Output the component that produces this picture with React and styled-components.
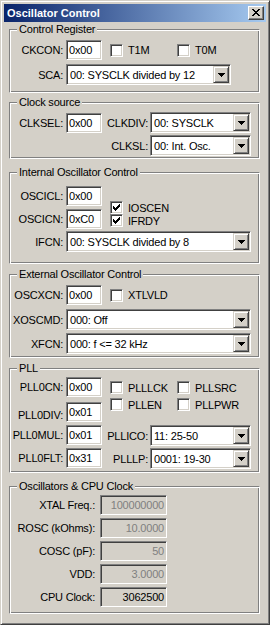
import React from "react";
import styled, { createGlobalStyle } from "styled-components";

const Global = createGlobalStyle`
  html, body { margin: 0; padding: 0; background: #D4D0C8; }
  body {
    font-family: "Liberation Sans", Arial, sans-serif;
    font-size: 11px;
    letter-spacing: -0.2px;
    color: #000;
  }
  * { box-sizing: border-box; }
`;

const Window = styled.div`
  width: 270px;
  height: 625px;
  border: 1px solid;
  border-color: #D4D0C8 #404040 #404040 #D4D0C8;
  box-shadow: inset 1px 1px 0 #fff, inset -1px -1px 0 #808080;
  padding: 3px;
  background: #D4D0C8;
  display: flex;
  flex-direction: column;
`;

const TitleBar = styled.div`
  height: 18px;
  flex: none;
  display: flex;
  align-items: center;
  justify-content: space-between;
  padding: 0 2px 0 2px;
  background: linear-gradient(to right, #0A246A, #A6CAF0);
`;

const TitleText = styled.span`
  color: #fff;
  font-weight: bold;
  font-size: 11px;
  letter-spacing: 0;
  padding-left: 1px;
`;

const CloseButton = styled.div`
  width: 16px;
  height: 14px;
  border: 1px solid;
  border-color: #fff #404040 #404040 #fff;
  box-shadow: inset -1px -1px 0 #808080;
  background: #D4D0C8;
  display: flex;
  align-items: center;
  justify-content: center;
  padding-bottom: 1px;
  svg { display: block; }
`;

const Body = styled.div`
  display: flex;
  flex-direction: column;
  padding: 0 6px 0 5px;
`;

const Group = styled.div`
  position: relative;
  height: ${(p) => p.$h}px;
  margin-top: ${(p) => p.$mt}px;
  padding: ${(p) => p.$pt}px 1px 0 1px;
  border: 1px solid;
  border-color: #808080 #fff #fff #808080;
  box-shadow: inset 1px 1px 0 #fff, inset -1px -1px 0 #808080;
  display: flex;
  flex-direction: column;
`;

const Legend = styled.span`
  position: absolute;
  top: -7px;
  left: 7px;
  padding: 0 2px;
  line-height: 13px;
  background: #D4D0C8;
  white-space: nowrap;
`;

const Row = styled.div`
  display: flex;
  align-items: center;
  margin-top: ${(p) => p.$mt || 0}px;
`;

const Cols = styled.div`
  display: flex;
  align-items: flex-start;
  margin-top: ${(p) => p.$mt || 0}px;
`;

const Stack = styled.div`
  display: flex;
  flex-direction: column;
  padding-top: ${(p) => p.$pt || 0}px;
  gap: ${(p) => p.$gap || 0}px;
`;

const Label = styled.span`
  flex: none;
  width: ${(p) => p.$w}px;
  padding-right: ${(p) => p.$pr ?? 3}px;
  padding-top: ${(p) => p.$dy || 0}px;
  text-align: right;
  white-space: nowrap;
`;

const TextBox = styled.div`
  flex: none;
  width: ${(p) => p.$w}px;
  height: 20px;
  border: 1px solid;
  border-color: #808080 #fff #fff #808080;
  box-shadow: inset 1px 1px 0 #404040, inset -1px -1px 0 #D4D0C8;
  background: ${(p) => (p.$disabled || p.$readonly ? "#D4D0C8" : "#fff")};
  color: ${(p) => (p.$disabled ? "#808080" : "#000")};
  display: flex;
  align-items: center;
  justify-content: ${(p) => (p.$right ? "flex-end" : "flex-start")};
  padding: 0 2px;
  white-space: nowrap;
`;

const ComboFrame = styled.div`
  flex: none;
  width: ${(p) => p.$w}px;
  height: 21px;
  border: 1px solid;
  border-color: #808080 #fff #fff #808080;
  box-shadow: inset 1px 1px 0 #404040, inset -1px -1px 0 #D4D0C8;
  background: #fff;
  display: flex;
  align-items: center;
  padding-right: 1px;
`;

const ComboText = styled.span`
  flex: 1;
  padding-left: 3px;
  white-space: nowrap;
  overflow: hidden;
`;

const DropButton = styled.div`
  flex: none;
  width: 16px;
  height: 17px;
  border: 1px solid;
  border-color: #D4D0C8 #404040 #404040 #D4D0C8;
  box-shadow: inset 1px 1px 0 #fff, inset -1px -1px 0 #808080;
  background: #D4D0C8;
  display: flex;
  align-items: center;
  justify-content: center;
  svg { display: block; }
`;

const CheckItem = styled.div`
  flex: none;
  display: flex;
  align-items: center;
  height: 13px;
  width: ${(p) => p.$w || 67}px;
  margin-left: ${(p) => p.$ml || 0}px;
`;

const CheckBoxFrame = styled.div`
  flex: none;
  width: 13px;
  height: 13px;
  border: 1px solid;
  border-color: #808080 #fff #fff #808080;
  box-shadow: inset 1px 1px 0 #404040, inset -1px -1px 0 #D4D0C8;
  background: #fff;
  padding: 2px;
  svg { display: block; }
`;

const CheckText = styled.span`
  margin-left: 5px;
  white-space: nowrap;
`;

const CheckGrid = styled.div`
  display: grid;
  grid-template-columns: 67px 67px;
  row-gap: 4px;
  padding-top: ${(p) => p.$pt || 0}px;
  margin-left: 8px;
`;

const Arrow = () => (
  <svg width="7" height="4" viewBox="0 0 7 4" shapeRendering="crispEdges">
    <rect x="0" y="0" width="7" height="1" />
    <rect x="1" y="1" width="5" height="1" />
    <rect x="2" y="2" width="3" height="1" />
    <rect x="3" y="3" width="1" height="1" />
  </svg>
);

const CloseGlyph = () => (
  <svg width="8" height="7" viewBox="0 0 8 7" shapeRendering="crispEdges">
    <rect x="0" y="0" width="2" height="1" />
    <rect x="6" y="0" width="2" height="1" />
    <rect x="1" y="1" width="2" height="1" />
    <rect x="5" y="1" width="2" height="1" />
    <rect x="2" y="2" width="4" height="1" />
    <rect x="3" y="3" width="2" height="1" />
    <rect x="2" y="4" width="4" height="1" />
    <rect x="1" y="5" width="2" height="1" />
    <rect x="5" y="5" width="2" height="1" />
    <rect x="0" y="6" width="2" height="1" />
    <rect x="6" y="6" width="2" height="1" />
  </svg>
);

const Combo = ({ w, children }) => (
  <ComboFrame $w={w}>
    <ComboText>{children}</ComboText>
    <DropButton>
      <Arrow />
    </DropButton>
  </ComboFrame>
);

const Check = ({ label, checked, ml, w }) => (
  <CheckItem $ml={ml} $w={w}>
    <CheckBoxFrame>
      {checked && (
        <svg width="7" height="7" viewBox="0 0 7 7" shapeRendering="crispEdges">
          <rect x="0" y="2" width="1" height="3" />
          <rect x="1" y="3" width="1" height="3" />
          <rect x="2" y="4" width="1" height="3" />
          <rect x="3" y="3" width="1" height="3" />
          <rect x="4" y="2" width="1" height="3" />
          <rect x="5" y="1" width="1" height="3" />
          <rect x="6" y="0" width="1" height="3" />
        </svg>
      )}
    </CheckBoxFrame>
    <CheckText>{label}</CheckText>
  </CheckItem>
);

const Field = ({ label, value, dy }) => (
  <Row>
    <Label $w={55} $dy={dy}>{label}</Label>
    <TextBox $w={36}>{value}</TextBox>
  </Row>
);

const clockRows = [
  { label: "XTAL Freq.:", value: "100000000", disabled: true },
  { label: "ROSC (kOhms):", value: "10.0000", disabled: true },
  { label: "COSC (pF):", value: "50", disabled: true },
  { label: "VDD:", value: "3.0000", disabled: true },
  { label: "CPU Clock:", value: "3062500", disabled: false },
];

export default function App() {
  return (
    <>
      <Global />
      <Window>
        <TitleBar>
          <TitleText>Oscillator Control</TitleText>
          <CloseButton>
            <CloseGlyph />
          </CloseButton>
        </TitleBar>
        <Body>
          <Group $h={64} $mt={7} $pt={10}>
            <Legend>Control Register</Legend>
            <Row>
              <Label $w={55}>CKCON:</Label>
              <TextBox $w={36}>0x00</TextBox>
              <Check label="T1M" ml={8} />
              <Check label="T0M" />
            </Row>
            <Row $mt={4}>
              <Label $w={55}>SCA:</Label>
              <Combo w={165}>00: SYSCLK divided by 12</Combo>
            </Row>
          </Group>

          <Group $h={57} $mt={9} $pt={9}>
            <Legend>Clock source</Legend>
            <Row>
              <Label $w={55}>CLKSEL:</Label>
              <TextBox $w={36}>0x00</TextBox>
              <Label $w={48} $pr={2}>CLKDIV:</Label>
              <Combo w={101}>00: SYSCLK</Combo>
            </Row>
            <Row $mt={2}>
              <Label $w={139} $pr={2}>CLKSL:</Label>
              <Combo w={101}>00: Int. Osc.</Combo>
            </Row>
          </Group>

          <Group $h={92} $mt={13} $pt={13}>
            <Legend>Internal Oscillator Control</Legend>
            <Cols>
              <Stack $gap={3}>
                <Field label="OSCICL:" value="0x00" />
                <Field label="OSCICN:" value="0xC0" />
              </Stack>
              <Stack $pt={15}>
                <Check label="IOSCEN" checked ml={8} />
                <Check label="IFRDY" checked ml={8} />
              </Stack>
            </Cols>
            <Row $mt={2}>
              <Label $w={55}>IFCN:</Label>
              <Combo w={185}>00: SYSCLK divided by 8</Combo>
            </Row>
          </Group>

          <Group $h={84} $mt={10} $pt={10}>
            <Legend>External Oscillator Control</Legend>
            <Row>
              <Label $w={55}>OSCXCN:</Label>
              <TextBox $w={36}>0x00</TextBox>
              <Check label="XTLVLD" ml={8} w={100} />
            </Row>
            <Row $mt={4}>
              <Label $w={55}>XOSCMD:</Label>
              <Combo w={185}>000: Off</Combo>
            </Row>
            <Row $mt={3}>
              <Label $w={55}>XFCN:</Label>
              <Combo w={185}>000: f &lt;= 32 kHz</Combo>
            </Row>
          </Group>

          <Group $h={105} $mt={10} $pt={8}>
            <Legend>PLL</Legend>
            <Cols>
              <Stack>
                <Field label="PLL0CN:" value="0x00" />
                <Row $mt={5}>
                  <Label $w={55} $dy={6}>PLL0DIV:</Label>
                  <TextBox $w={36}>0x01</TextBox>
                </Row>
                <Row $mt={3}>
                  <Label $w={55}>PLL0MUL:</Label>
                  <TextBox $w={36}>0x01</TextBox>
                </Row>
                <Row $mt={3}>
                  <Label $w={55}>PLL0FLT:</Label>
                  <TextBox $w={36}>0x31</TextBox>
                </Row>
              </Stack>
              <Stack>
                <CheckGrid $pt={4}>
                  <Check label="PLLLCK" />
                  <Check label="PLLSRC" />
                  <Check label="PLLEN" />
                  <Check label="PLLPWR" />
                </CheckGrid>
                <Row $mt={14}>
                  <Label $w={48} $pr={2}>PLLICO:</Label>
                  <Combo w={101}>11: 25-50</Combo>
                </Row>
                <Row $mt={2}>
                  <Label $w={48} $pr={2}>PLLLP:</Label>
                  <Combo w={101}>0001: 19-30</Combo>
                </Row>
              </Stack>
            </Cols>
          </Group>

          <Group $h={128} $mt={13} $pt={8}>
            <Legend>Oscillators &amp; CPU Clock</Legend>
            <Stack $gap={3}>
              {clockRows.map((r) => (
                <Row key={r.label}>
                  <Label $w={89} $pr={5}>{r.label}</Label>
                  <TextBox $w={67} $right $disabled={r.disabled} $readonly={!r.disabled}>
                    {r.value}
                  </TextBox>
                </Row>
              ))}
            </Stack>
          </Group>
        </Body>
      </Window>
    </>
  );
}
